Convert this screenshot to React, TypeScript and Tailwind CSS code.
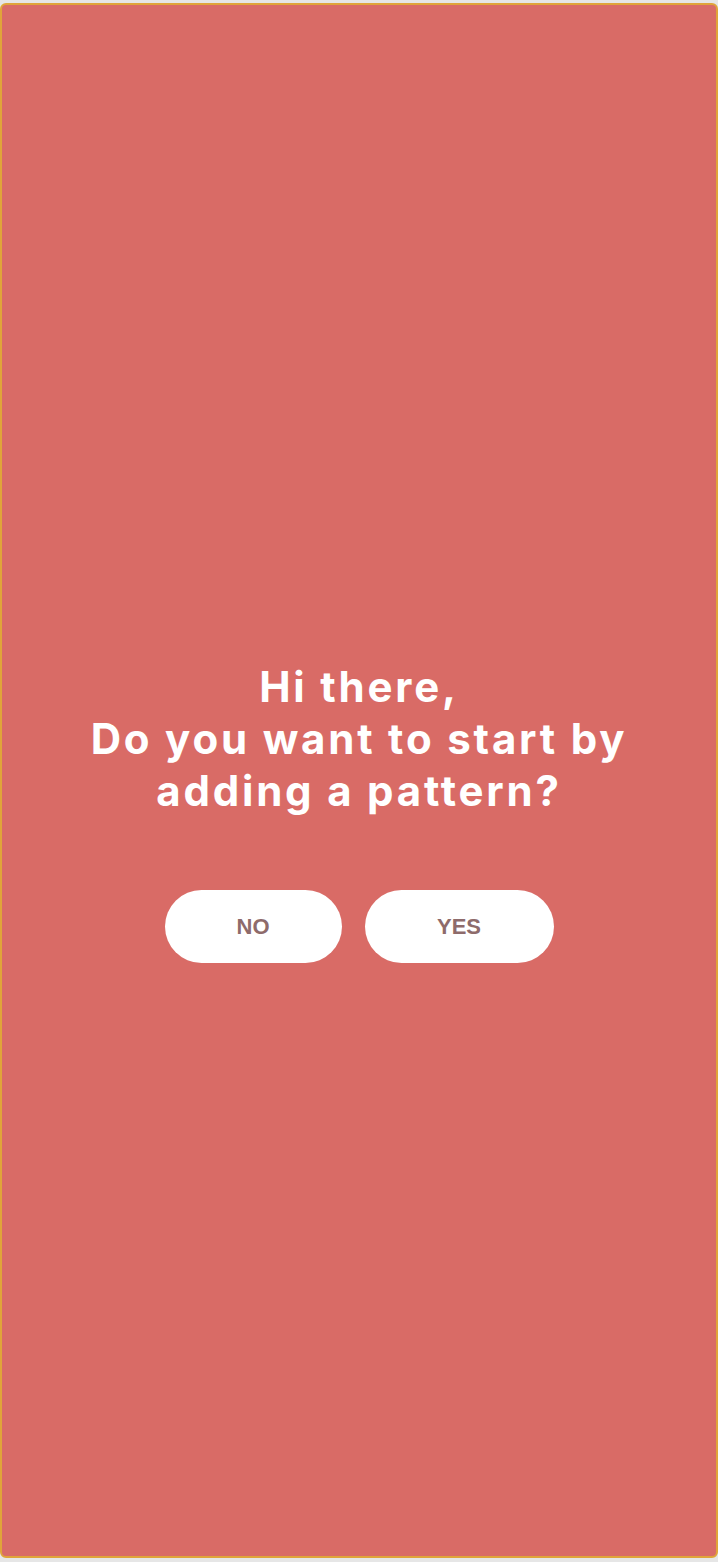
export default function App() {
  return (
    <div className="h-[1562px] w-[718px] bg-[#e6e6e6] pt-[3px] pb-[4px]">
      <div className="flex h-full w-full flex-col items-center rounded-[6px] border-2 border-[#e0a43a] bg-[#d96b66] pt-[656px]">
        <h1
          className="text-center text-[42px] font-bold leading-[52px] tracking-[2.8px] text-white"
          style={{ fontFamily: 'Inter, "Open Sans", sans-serif' }}
        >
          Hi there,
          <br />
          Do you want to start by
          <br />
          adding a pattern?
        </h1>
        <div
          className="mt-[73px] flex gap-[23px]"
          style={{ fontFamily: '"Liberation Sans", Arial, sans-serif' }}
        >
          <button className="flex h-[73px] w-[177px] items-center justify-center rounded-full bg-white text-[22px] font-bold text-[#8e6b6b]">
            NO
          </button>
          <button className="flex h-[73px] w-[189px] items-center justify-center rounded-full bg-white text-[22px] font-bold text-[#8e6b6b]">
            YES
          </button>
        </div>
      </div>
    </div>
  );
}
